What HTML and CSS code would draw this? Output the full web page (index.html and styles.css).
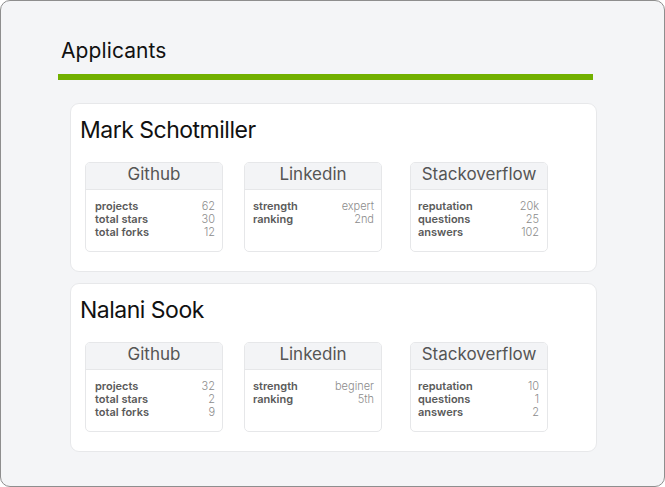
FILE: index.html
```html
<!DOCTYPE html>
<html>
<head>
<meta charset="utf-8">
<link rel="stylesheet" href="styles.css">
</head>
<body>
<div class="window">
  <h1 class="title">Applicants</h1>
  <div class="bar"></div>

  <div class="applicant">
    <h2 class="name">Mark Schotmiller</h2>
    <div class="sources">
      <div class="source gh">
        <div class="source-head">Github</div>
        <div class="source-body">
          <div class="row"><span class="label">projects</span><span class="value">62</span></div>
          <div class="row"><span class="label">total stars</span><span class="value">30</span></div>
          <div class="row"><span class="label">total forks</span><span class="value">12</span></div>
        </div>
      </div>
      <div class="source li">
        <div class="source-head">Linkedin</div>
        <div class="source-body">
          <div class="row"><span class="label">strength</span><span class="value">expert</span></div>
          <div class="row"><span class="label">ranking</span><span class="value">2nd</span></div>
        </div>
      </div>
      <div class="source so">
        <div class="source-head">Stackoverflow</div>
        <div class="source-body">
          <div class="row"><span class="label">reputation</span><span class="value">20k</span></div>
          <div class="row"><span class="label">questions</span><span class="value">25</span></div>
          <div class="row"><span class="label">answers</span><span class="value">102</span></div>
        </div>
      </div>
    </div>
  </div>

  <div class="applicant">
    <h2 class="name">Nalani Sook</h2>
    <div class="sources">
      <div class="source gh">
        <div class="source-head">Github</div>
        <div class="source-body">
          <div class="row"><span class="label">projects</span><span class="value">32</span></div>
          <div class="row"><span class="label">total stars</span><span class="value">2</span></div>
          <div class="row"><span class="label">total forks</span><span class="value">9</span></div>
        </div>
      </div>
      <div class="source li">
        <div class="source-head">Linkedin</div>
        <div class="source-body">
          <div class="row"><span class="label">strength</span><span class="value">beginer</span></div>
          <div class="row"><span class="label">ranking</span><span class="value">5th</span></div>
        </div>
      </div>
      <div class="source so">
        <div class="source-head">Stackoverflow</div>
        <div class="source-body">
          <div class="row"><span class="label">reputation</span><span class="value">10</span></div>
          <div class="row"><span class="label">questions</span><span class="value">1</span></div>
          <div class="row"><span class="label">answers</span><span class="value">2</span></div>
        </div>
      </div>
    </div>
  </div>
</div>
</body>
</html>
```

FILE: styles.css
```css
* { box-sizing: border-box; }
html, body { margin: 0; padding: 0; background: #ffffff; }
body { font-family: Inter, "Noto Sans", "Liberation Sans", sans-serif; }

.window {
  width: 665px;
  height: 487px;
  border: 1px solid #8e8e8e;
  border-radius: 10px;
  background: #f4f5f7;
  padding: 37px 0 0 0;
  overflow: hidden;
}

.title {
  margin: 0 0 11px 60px;
  font-size: 21px;
  line-height: 25px;
  font-weight: 400;
  letter-spacing: 0.1px;
  color: #111;
}

.bar {
  margin-left: 57px;
  width: 535px;
  height: 6px;
  background: #72b000;
  margin-bottom: 23px;
}

.applicant {
  margin-left: 69px;
  width: 527px;
  background: #ffffff;
  border: 1px solid #e7e8ea;
  border-radius: 9px;
  padding: 12px 0 19px 14px;
  margin-bottom: 11px;
}

.name {
  margin: 0 0 18px -5px;
  font-size: 23px;
  line-height: 28px;
  font-weight: 400;
  letter-spacing: -0.5px;
  color: #111;
}

.sources {
  display: flex;
  align-items: stretch;
}

.source {
  width: 138px;
  border: 1px solid #e6e7e9;
  border-radius: 5px;
  overflow: hidden;
  background: #fff;
}
.source + .source { margin-left: 21px; }
.source + .source + .source { margin-left: 28px; }

.source-head {
  height: 27px;
  background: #f3f4f6;
  border-bottom: 1px solid #e6e7e9;
  text-align: center;
  font-size: 17px;
  line-height: 22px;
  color: #555;
}

.source-body {
  padding: 10px 7px 11px 9px;
  height: 61px;
}
.li .source-body { padding-left: 8px; padding-right: 7px; }
.so .source-body { padding-left: 7px; padding-right: 8px; }

.row {
  display: flex;
  justify-content: space-between;
  font-size: 11px;
  line-height: 13px;
}

.label { font-weight: 600; color: #5a5a5a; }
.value { color: #8c8c8c; font-weight: 300; }
```
